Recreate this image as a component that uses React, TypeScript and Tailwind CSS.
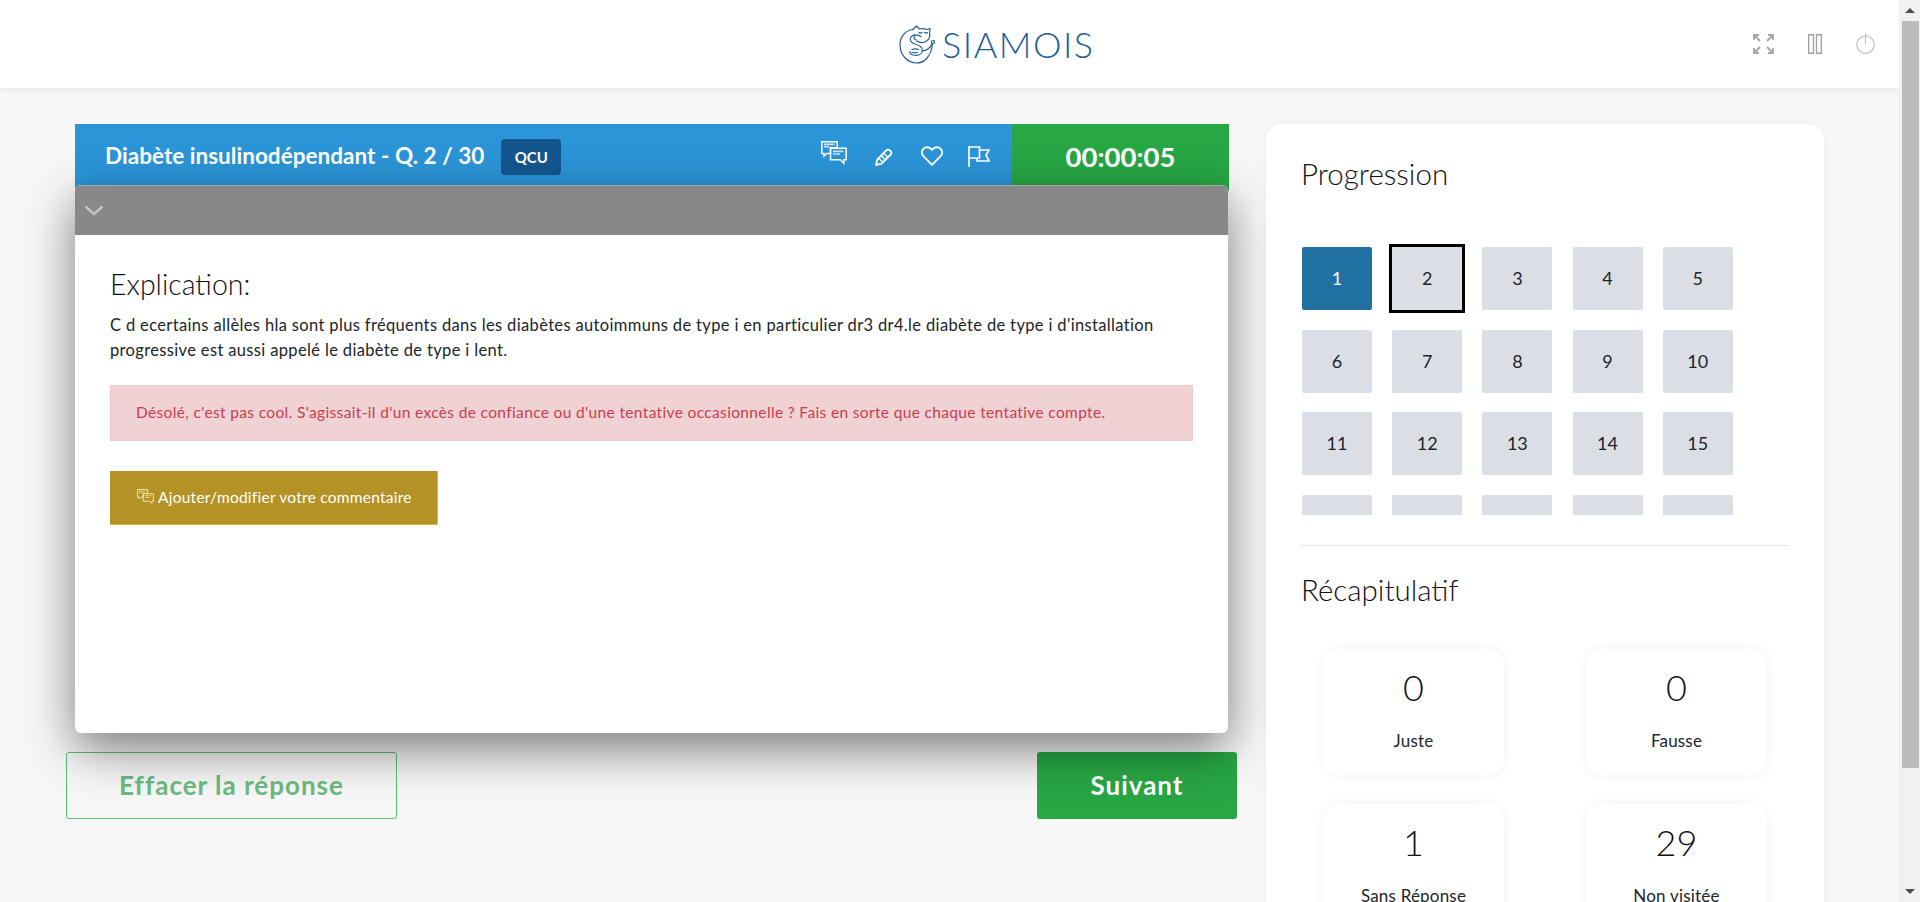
const FONT = "font-['Lato','Noto_Sans',sans-serif]";

function ChatIcon({ className }: { className: string }) {
  return (
    <svg viewBox="0 0 26 26" fill="none" stroke="currentColor" strokeWidth={1.5} className={className}>
      <path d="M.8.8h15.400v6H9.500v5.600H5.600l-2.600 2.600v-2.600H.8z" />
      <path d="M3 3.400h10.500M3 5.800h5" strokeWidth={1.6} opacity={0.75} />
      <path d="M9.500 7.200h15.700v11.600h-2.400v3.400l-3.400-3.400H9.500z" />
      <path d="M12 10.400h10.500M12 13h7" strokeWidth={1.6} opacity={0.75} />
    </svg>
  );
}

function PencilIcon() {
  return (
    <svg viewBox="0 0 18 18" fill="none" stroke="currentColor" strokeWidth={1.8} className="w-[18px] h-[18px]">
      <path d="M1 17l1.300-5.500L11.500 2.200c.9-.9 2.200-.9 3.100 0l1.200 1.200c.9.900.9 2.200 0 3.100L6.500 15.700z" strokeLinejoin="round" />
      <path d="M4 10.500l3.500 3.500M6.500 8l3.500 3.500M9 5.500l3.500 3.500" strokeWidth={1.4} />
    </svg>
  );
}

function HeartIcon() {
  return (
    <svg viewBox="0 0 22 20" fill="none" stroke="currentColor" strokeWidth={1.9} className="w-[22px] h-5">
      <path d="M11 18.800L2.600 10.400C.4 8.200.4 4.900 2.400 2.800 4.500.6 8 .7 10 2.800l1 1.100 1-1.100c2-2.100 5.500-2.200 7.600 0 2 2.100 2 5.400-.2 7.600z" strokeLinejoin="round" />
    </svg>
  );
}

function FlagIcon() {
  return (
    <svg viewBox="0 0 22 21" fill="none" stroke="currentColor" strokeWidth={1.7} className="w-[22px] h-[21px]">
      <path d="M1 0v21" />
      <path d="M1 1h10.500v3h9.500l-3 5 3 6H9v-3H1" />
      <path d="M11.500 4v8H9" />
    </svg>
  );
}

function Logo() {
  return (
    <svg viewBox="0 0 36 39" fill="none" stroke="#1f5f94" strokeWidth={1.2} className="w-[36px] h-[39px]" strokeLinecap="round" strokeLinejoin="round">
      <path d="M14 4.500C6 5.500 1 12 1 20c0 10 7.500 18 16.500 18C26 38 32 31 33.500 19" />
      <path d="M14 4.500L17.500 1l3 3c2.500-.5 5-.5 7.500.5l3-1-.5 5c1 3-.5 6.500-3.500 8-3 1.500-6 1.500-9.500-.5" />
      <path d="M20 7.500c1 .8 2 .8 3 0M25.500 7.500c1 .8 2 .8 3 0" />
      <path d="M22 11.500c-3-2-8-2.500-10 .5-2 3 0 5.500 4 7 4 1.500 8 3 7.500 7-.5 3.500-5 5-9.500 4-2-.5-3.500-2-3-3.500" />
      <path d="M16 11c-1.500 1-1.500 3 1 4M13 24.500c2.500-1 5-.5 6.500 0M13 27.500c2 .5 4 .5 5.500 0" />
      <path d="M23.500 26c3.500-.5 8-3 9.500-7.500" />
      <circle cx="34" cy="17" r="1.500" />
    </svg>
  );
}

function Header() {
  return (
    <header className="relative z-30 h-[88px] bg-white shadow-[0_1px_6px_rgba(0,0,0,0.08)] flex items-center">
      <div className="ml-[899px] flex items-center gap-[7px]">
        <Logo />
        <span className="text-[36px] leading-none font-light text-[#1f5f94] tracking-[1.5px]">SIAMOIS</span>
      </div>
      <div className="ml-auto flex items-center mr-[24px] text-[#a3a3a3]">
        <svg viewBox="0 0 21 20" fill="none" stroke="currentColor" strokeWidth={1.8} className="w-[21px] h-5">
          <path d="M1 6V1h5M1 1l6 6M15 1h5v5M20 1l-6 6M1 14v5h5M1 19l6-6M20 14v5h-5M20 19l-6-6" />
        </svg>
        <svg viewBox="0 0 14 20" fill="none" stroke="currentColor" strokeWidth={1.4} className="w-[14px] h-5 ml-[34px]">
          <path d="M.7.700h4.800v18.600H.7zM8.500.700h4.800v18.600H8.500z" />
        </svg>
        <svg viewBox="0 0 19 20" fill="none" stroke="#bdbdbd" strokeWidth={1.1} className="w-[19px] h-5 ml-[34px]">
          <path d="M5.500 3A8.700 8.700 0 1 0 13.500 3" />
          <path d="M9.500 0v10" />
          <path d="M5.500 3a8.700 8.700 0 0 1 8 0" />
        </svg>
      </div>
    </header>
  );
}

function ExplanationPanel() {
  return (
    <div className="absolute z-10 top-[61px] left-0 right-[1px] h-[548px] rounded-[6px] bg-white shadow-[0_16px_48px_rgba(0,0,0,0.5)] overflow-hidden">
      <div className="h-[50px] bg-[#888888] border-t border-[#a5a5a5] flex items-center pl-[9px]">
        <svg viewBox="0 0 20 11" fill="none" stroke="#c4c4c4" strokeWidth={2.4} className="w-5 h-[11px]">
          <path d="M1.500 1.500L10 9l8.500-7.500" />
        </svg>
      </div>
      <div className="px-[35px] pt-[32px]">
        <h2 className="text-[28.500px] leading-[34px] font-light text-[#111111]">Explication:</h2>
        <p className="mt-[12px] text-[16.500px] leading-[25px] tracking-[0.35px] text-[#212529]">
          C d ecertains allèles hla sont plus fréquents dans les diabètes autoimmuns de type i en particulier dr3 dr4.le diabète de type i d'installation progressive est aussi appelé le diabète de type i lent.
        </p>
        <div className="mt-[22px] h-[56px] bg-[#f0d1d4] border border-[#eec9cd] flex items-center pl-[25px] text-[15.500px] tracking-[0.35px] text-[#c5404f]">
          Désolé, c'est pas cool. S'agissait-il d'un excès de confiance ou d'une tentative occasionnelle ? Fais en sorte que chaque tentative compte.
        </div>
        <button className="mt-[30px] w-[328px] h-[54px] bg-[#b59226] border-b border-r border-[#d9b74f] flex items-center pl-[27px] text-[15.500px] tracking-[0.25px] text-white">
          <ChatIcon className="w-[17px] h-[17px] mr-[4px] text-[#f2e3b3]" />
          Ajouter/modifier votre commentaire
        </button>
      </div>
    </div>
  );
}

function QuestionColumn() {
  return (
    <div className="relative w-[1154px] shrink-0">
      <div className="h-[67px] flex">
        <div className="flex-1 bg-[#2b95d8] flex pt-[15px] pl-[30px] text-white">
          <span className="text-[22.500px] leading-[33px] font-bold tracking-[0.03px]">Diabète insulinodépendant - Q. 2 / 30</span>
          <span className="ml-[17px] w-[60px] h-[36px] rounded-[4px] bg-[#14578f] flex items-center justify-center text-[15px] font-bold">QCU</span>
          <div className="ml-auto flex items-start pr-[22px] pt-[2px]">
            <ChatIcon className="w-[26px] h-[26px]" />
            <div className="ml-[28px] mt-[7px]"><PencilIcon /></div>
            <div className="ml-[28px] mt-[5px]"><HeartIcon /></div>
            <div className="ml-[25px] mt-[5px]"><FlagIcon /></div>
          </div>
        </div>
        <div className="w-[217px] bg-[#28a745] flex justify-center pt-[15px] text-[27.500px] leading-[36px] font-bold text-white">00:00:05</div>
      </div>
      <ExplanationPanel />
      <div className="mt-[561px] -ml-[9px] -mr-[8px] flex justify-between">
        <button className="w-[331px] h-[67px] rounded-[3px] border border-[#5cc075] text-[26px] font-bold tracking-[1px] text-[#6cbb80]">Effacer la réponse</button>
        <button className="w-[200px] h-[67px] rounded-[3px] bg-[#28a745] text-[26px] font-bold tracking-[1px] text-white">Suivant</button>
      </div>
    </div>
  );
}

const NUMBERS = Array.from({ length: 20 }, (_, i) => i + 1);

function Square({ n }: { n: number }) {
  if (n === 1) {
    return <div className="h-[63px] rounded-[2px] bg-[#2070a2] text-white flex items-center justify-center text-[18px]">{n}</div>;
  }
  if (n === 2) {
    return <div className="h-[63px] bg-[#dbdfe5] outline-[3px] outline-black text-[#212529] flex items-center justify-center text-[18px]">{n}</div>;
  }
  return <div className="h-[63px] rounded-[2px] bg-[#dbdfe5] text-[#212529] flex items-center justify-center text-[18px]">{n}</div>;
}

function Stat({ value, label }: { value: number; label: string }) {
  return (
    <div className="h-[126px] rounded-[16px] bg-white shadow-[0_0_12px_rgba(0,0,0,0.06)] flex flex-col items-center pt-[16px] text-[#212529]">
      <div className="text-[36px] leading-[44px] font-light text-[#111111]">{value}</div>
      <div className="mt-[20px] text-[17px] leading-[24px] tracking-[0.2px]">{label}</div>
    </div>
  );
}

function SideCard() {
  return (
    <aside className="relative z-20 ml-[37px] w-[558px] h-[1000px] rounded-[16px] bg-white shadow-[0_0_8px_rgba(0,0,0,0.05)] pl-[36px] pr-[35px] pt-[33px]">
      <h2 className="-ml-[1px] text-[29.500px] leading-[34px] font-light text-[#111111]">Progression</h2>
      <div className="mt-[53px] h-[271px] overflow-hidden pt-[3px]">
        <div className="grid grid-cols-[repeat(5,70px)] gap-x-[20.200px] gap-y-[19.700px]">
          {NUMBERS.map((n) => <Square key={n} n={n} />)}
        </div>
      </div>
      <div className="mt-[30px] -ml-[1px] border-t border-[#e4e4e4]" />
      <h2 className="-ml-[1px] mt-[27px] text-[29.500px] leading-[34px] font-light text-[#111111]">Récapitulatif</h2>
      <div className="mt-[42px] ml-[21px] grid grid-cols-[181px_181px] gap-x-[82px] gap-y-[29px]">
        <Stat value={0} label="Juste" />
        <Stat value={0} label="Fausse" />
        <Stat value={1} label="Sans Réponse" />
        <Stat value={29} label="Non visitée" />
      </div>
    </aside>
  );
}

function ScrollBar() {
  return (
    <div className="w-[21px] shrink-0 bg-[#f1f1f1] flex flex-col items-center relative z-30">
      <div className="h-[21px] w-full flex items-center justify-center">
        <div className="w-0 h-0 border-x-[5px] border-x-transparent border-b-[5px] border-b-[#505050]" />
      </div>
      <div className="ml-[1px] w-[17px] h-[747px] bg-[#bcbcbc]" />
      <div className="mt-auto h-[21px] w-full flex items-center justify-center">
        <div className="w-0 h-0 border-x-[5px] border-x-transparent border-t-[5px] border-t-[#505050]" />
      </div>
    </div>
  );
}

export default function App() {
  return (
    <div className={`h-[902px] overflow-hidden flex bg-[#f7f7f7] ${FONT}`}>
      <div className="flex-1 min-w-0">
        <Header />
        <main className="flex pt-[36px] pl-[75px]">
          <QuestionColumn />
          <SideCard />
        </main>
      </div>
      <ScrollBar />
    </div>
  );
}
